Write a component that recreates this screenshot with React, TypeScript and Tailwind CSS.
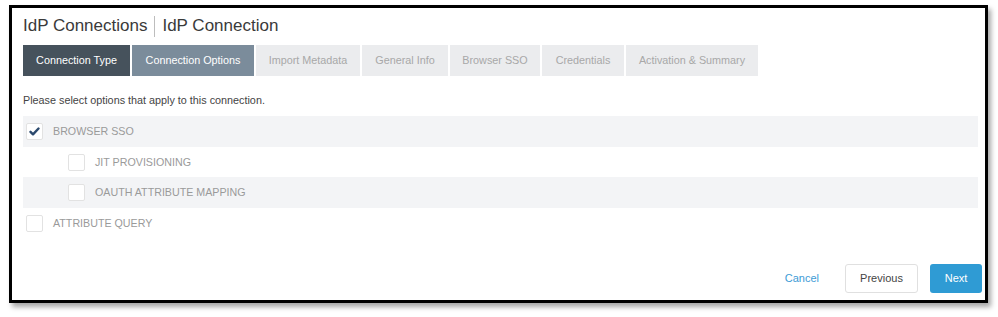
import React from "react";

const tabs = [
  { label: "Connection Type", w: 107, cls: "bg-[#46525c] text-white" },
  { label: "Connection Options", w: 122, cls: "bg-[#7b8c9b] text-white" },
  { label: "Import Metadata", w: 104, cls: "bg-[#ebecee] text-[#a8a8a8]" },
  { label: "General Info", w: 86, cls: "bg-[#ebecee] text-[#a8a8a8]" },
  { label: "Browser SSO", w: 90, cls: "bg-[#ebecee] text-[#a8a8a8]" },
  { label: "Credentials", w: 82, cls: "bg-[#ebecee] text-[#a8a8a8]" },
  { label: "Activation & Summary", w: 132, cls: "bg-[#ebecee] text-[#a8a8a8]" },
];

function Box({ checked }: { checked?: boolean }) {
  return (
    <div className="w-[17px] h-[17px] bg-white border border-[#e2e2e2] rounded-[2px] flex items-center justify-center shrink-0">
      {checked && (
        <svg width="11" height="9" viewBox="0 0 11 9">
          <path d="M1.5 4.8 L4 7.3 L9.5 1.5" fill="none" stroke="#2c4a6e" strokeWidth="2.4" strokeLinecap="round" strokeLinejoin="round" />
        </svg>
      )}
    </div>
  );
}

const rows = [
  { label: "BROWSER SSO", indent: false, checked: true, shaded: true, h: "h-[31px]" },
  { label: "JIT PROVISIONING", indent: true, checked: false, shaded: false, h: "h-[30px]" },
  { label: "OAUTH ATTRIBUTE MAPPING", indent: true, checked: false, shaded: true, h: "h-[31px]" },
  { label: "ATTRIBUTE QUERY", indent: false, checked: false, shaded: false, h: "h-[30px]" },
];

export default function App() {
  return (
    <div className="w-[998px] h-[317px] bg-white pl-[9px] pt-[5px]" style={{ fontFamily: '"Liberation Sans", Arial, sans-serif' }}>
      <div className="w-[979px] h-[298px] border-[3px] border-black bg-white shadow-[3px_4px_5px_rgba(0,0,0,0.35)] flex flex-col pl-[11px] pt-[6px] pb-[7px]">
        <div className="h-[24px] flex items-center text-[17px] text-[#3a3a3a]">
          <span>IdP Connections</span>
          <span className="mx-[7px] w-px h-[21px] bg-[#bdbdbd]" />
          <span>IdP Connection</span>
        </div>
        <div className="mt-[7px] flex gap-[2px] h-[31px]">
          {tabs.map((t) => (
            <div key={t.label} className={`${t.cls} flex items-center justify-center text-[10.8px] shrink-0`} style={{ width: t.w }}>
              {t.label}
            </div>
          ))}
        </div>
        <div className="mt-[16px] text-[10.8px] leading-[16px] text-[#444]">Please select options that apply to this connection.</div>
        <div className="mt-[8px] w-[955px] flex flex-col">
          {rows.map((r) => (
            <div
              key={r.label}
              className={`${r.h} flex items-center ${r.shaded ? "bg-[#f3f4f6]" : "bg-white"} ${r.indent ? "pl-[45px]" : "pl-[3px]"}`}
            >
              <Box checked={r.checked} />
              <span className="ml-[10px] text-[10.7px] text-[#9a9a9a]">{r.label}</span>
            </div>
          ))}
        </div>
        <div className="mt-auto flex items-center justify-end pr-[3px]">
          <span className="text-[11px] text-[#3d9bd6] mr-[26px]">Cancel</span>
          <div className="w-[73px] h-[29px] border border-[#e0e0e0] rounded-[3px] flex items-center justify-center text-[11px] text-[#444] bg-white">Previous</div>
          <div className="ml-[12px] w-[52px] h-[29px] rounded-[3px] bg-[#2f9bd4] flex items-center justify-center text-[11px] text-white">Next</div>
        </div>
      </div>
    </div>
  );
}
